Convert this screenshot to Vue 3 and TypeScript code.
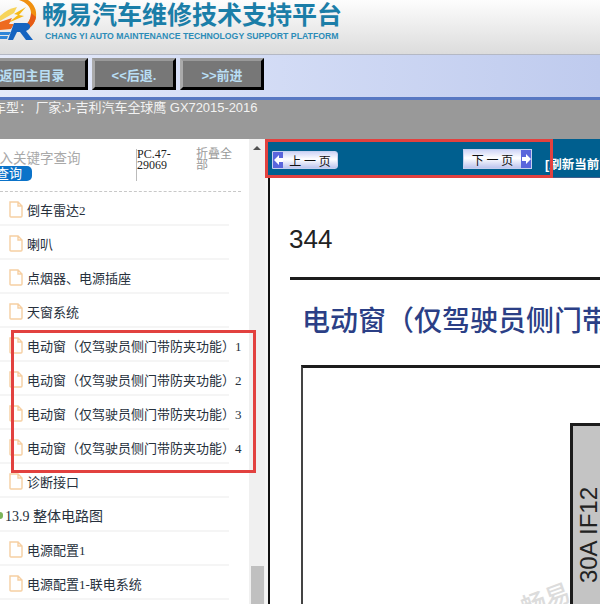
<script setup lang="ts">
interface TreeRow {
  label: string;
  kind: 'doc' | 'folder';
}

const windowTitle = '电动窗（仅驾驶员侧门带防夹功能）';

const rows: TreeRow[] = [
  { label: '倒车雷达2', kind: 'doc' },
  { label: '喇叭', kind: 'doc' },
  { label: '点烟器、电源插座', kind: 'doc' },
  { label: '天窗系统', kind: 'doc' },
  { label: `${windowTitle}1`, kind: 'doc' },
  { label: `${windowTitle}2`, kind: 'doc' },
  { label: `${windowTitle}3`, kind: 'doc' },
  { label: `${windowTitle}4`, kind: 'doc' },
  { label: '诊断接口', kind: 'doc' },
  { label: '13.9 整体电路图', kind: 'folder' },
  { label: '电源配置1', kind: 'doc' },
  { label: '电源配置1-联电系统', kind: 'doc' },
];
</script>

<template>
  <div class="page">
    <header class="brand">
      <svg class="logo" width="37" height="41" viewBox="0 0 37 41">
        <path d="M19 0 H28 C34 4 37 10 36 17 C35 23 31 28 26 30 L24 26 C29 23 31 18 31 13 C31 7 26 2 19 0 Z" fill="#f0900f" />
        <path d="M31 13 C31 18 29 23 24 26 L26 30 C31 28 35 23 36 17 Z" fill="#e65a16" />
        <path d="M0 16 C5 11 11 8 17 7 L14 13 L0 21 Z" fill="#f7d45a" />
        <path d="M26 7 L14 14 L18 15 L8 23 L24 16 L19 15 Z" fill="#f6b916" />
        <path d="M0 22 L12 18 L9 24 L14 24 L11 29 L0 30 Z" fill="#ee6a20" />
        <path d="M14 23 H26 C31 23 32 29 26 31 L33 40 H26 L20 32 H17 L13 40 H8 Z" fill="#1664c0" />
        <path d="M0 32 H11 L9 35 H0 Z M0 36 H8 L7 39 H0 Z" fill="#2f86d8" />
      </svg>
      <div class="brand-text">
        <div class="brand-name">畅易汽车维修技术支持平台</div>
        <div class="brand-sub">CHANG YI AUTO MAINTENANCE TECHNOLOGY SUPPORT PLATFORM</div>
      </div>
    </header>

    <nav class="nav">
      <button class="nav-btn nav-btn-home">返回主目录</button>
      <button class="nav-btn">&lt;&lt;后退.</button>
      <button class="nav-btn">&gt;&gt;前进</button>
    </nav>

    <div class="model-bar">车型： 厂家:J-吉利汽车全球鹰 GX72015-2016</div>

    <main class="main">
      <aside class="side">
        <div class="side-panel">
          <div class="search">
            <div class="search-left">
              <div class="search-hint">输入关键字查询</div>
              <div class="search-btn">查询</div>
            </div>
            <div class="search-code">PC.47-29069</div>
            <div class="search-fold">折叠全部</div>
          </div>
          <ul class="tree">
            <li v-for="row in rows" :key="row.label" class="tree-row">
              <template v-if="row.kind === 'doc'">
                <svg class="doc-icon" width="14" height="17" viewBox="0 0 14 17">
                  <path d="M1 1 H9 L13 5 V15 Q13 16 12 16 H2 Q1 16 1 15 Z M9 1 V5 H13" fill="#fff" stroke="#f6cfa2" stroke-width="1.4" />
                </svg>
              </template>
              <span v-else class="folder-dot"></span>
              <span class="tree-label" :class="{ 'tree-label-folder': row.kind === 'folder' }">{{ row.label }}</span>
            </li>
          </ul>
        </div>
        <div class="scrollbar">
          <span class="scroll-up"></span>
          <span class="scroll-thumb"></span>
        </div>
      </aside>

      <section class="viewer">
        <div class="pager">
          <div class="page-btn page-btn-prev">
            <span class="page-cap">
              <svg width="9" height="10" viewBox="0 0 9 10"><path d="M0 5 L5 0 V3 H9 V7 H5 V10 Z" fill="#fff" /></svg>
            </span>
            <span class="page-text">上 一 页</span>
          </div>
          <div class="page-btn page-btn-next">
            <span class="page-text">下 一 页</span>
            <span class="page-cap">
              <svg width="9" height="10" viewBox="0 0 9 10"><path d="M9 5 L4 0 V3 H0 V7 H4 V10 Z" fill="#fff" /></svg>
            </span>
          </div>
          <div class="refresh">[刷新当前页]</div>
        </div>

        <div class="sheet">
          <div class="sheet-num">344</div>
          <div class="sheet-rule"></div>
          <h1 class="sheet-title">{{ windowTitle }}</h1>
          <div class="diagram">
            <div class="fuse">
              <span class="fuse-label">30A IF12</span>
            </div>
          </div>
        </div>
      </section>
    </main>

    <div class="watermark">畅易</div>
    <div class="mark mark-pager"></div>
    <div class="mark mark-rows"></div>
  </div>
</template>

<style>
html,
body {
  margin: 0;
  overflow: hidden;
}
</style>

<style scoped>
.page {
  position: relative;
  width: 600px;
  height: 604px;
  overflow: hidden;
  background: #fff;
  font-family: "Liberation Sans", "Noto Sans CJK SC", sans-serif;
}

.brand {
  display: flex;
  height: 55px;
  box-sizing: border-box;
  background: linear-gradient(#fdfdfd, #dcdcdc);
  border-bottom: 1px solid #b4b8c4;
}

.logo {
  flex: none;
  margin-right: 5px;
}

.brand-text {
  display: flex;
  flex-direction: column;
}

.brand-name {
  height: 30px;
  font-size: 25px;
  line-height: 30px;
  font-weight: 700;
  color: #1b7ea8;
  white-space: nowrap;
}

.brand-sub {
  margin: 1px 0 0 3px;
  font-size: 8.7px;
  line-height: 11px;
  font-weight: 700;
  color: #2c8cb8;
  white-space: nowrap;
}

.nav {
  display: flex;
  gap: 4px;
  height: 42px;
  box-sizing: border-box;
  padding-top: 3px;
  background: linear-gradient(90deg, #e6ebfa, #d8e0f7 30%, #bfcbee);
}

.nav-btn {
  flex: none;
  width: 84px;
  height: 32px;
  box-sizing: border-box;
  padding: 0;
  background: #777;
  border-width: 3px;
  border-style: solid;
  border-color: #999 #000 #000 #aaa;
  font-family: inherit;
  font-size: 13px;
  font-weight: 700;
  color: #b9def4;
}

.nav-btn-home {
  width: 112px;
  margin-left: -24px;
}

.model-bar {
  height: 42px;
  box-sizing: border-box;
  text-indent: -7px;
  background: #999;
  border-top: 3px solid #5878c2;
  font-size: 13px;
  line-height: 15px;
  letter-spacing: -0.05px;
  color: #f2f2f2;
  white-space: nowrap;
}

.main {
  display: flex;
  height: 465px;
}

.side {
  display: flex;
  flex: none;
  width: 268px;
  border-right: 3px solid #f4f4f4;
  box-sizing: border-box;
}

.side-panel {
  flex: none;
  width: 249px;
  overflow: hidden;
}

.search {
  display: flex;
  width: 241px;
  height: 53px;
  box-sizing: border-box;
  border-bottom: 1px dashed #c8c8c8;
}

.search-left {
  flex: none;
  width: 136px;
  padding-top: 12px;
}

.search-hint {
  margin-left: -14px;
  font-size: 13.5px;
  line-height: 15px;
  color: #a9a9a9;
  white-space: nowrap;
}

.search-btn {
  width: 48px;
  height: 15px;
  margin-left: -16px;
  padding-right: 10px;
  box-sizing: border-box;
  background: #0b73c9;
  border-radius: 0 5px 5px 0;
  font-size: 13px;
  line-height: 15px;
  text-align: right;
  color: #fff;
}

.search-code {
  flex: none;
  width: 60px;
  height: 32px;
  box-sizing: border-box;
  margin-top: 10px;
  border-left: 1px solid #bbb;
  font-family: "Liberation Serif", serif;
  font-size: 12px;
  line-height: 11px;
  color: #222;
  word-break: break-word;
}

.search-fold {
  flex: none;
  width: 38px;
  margin-top: 10px;
  font-size: 12px;
  line-height: 11px;
  color: #999;
}

.tree {
  margin: 0;
  padding: 0;
  list-style: none;
}

.tree-row {
  display: flex;
  align-items: center;
  width: 229px;
  height: 34px;
  box-sizing: border-box;
  padding: 2px 0 0 9px;
  border-bottom: 2px solid #f5f5f5;
}

.doc-icon {
  flex: none;
  margin-right: 4px;
}

.folder-dot {
  flex: none;
  width: 3px;
  height: 7px;
  margin-left: -9px;
  margin-right: 2px;
  border-radius: 0 4px 4px 0;
  background: #7cb45a;
}

.tree-label {
  font-family: "Liberation Serif", "Noto Sans CJK SC", serif;
  font-size: 13px;
  color: #26303c;
  white-space: nowrap;
}

.tree-label-folder {
  font-size: 14px;
}

.scrollbar {
  display: flex;
  flex-direction: column;
  align-items: center;
  justify-content: space-between;
  flex: none;
  width: 16px;
  background: #f0f0f0;
}

.scroll-up {
  width: 0;
  height: 0;
  margin-top: 7px;
  border-left: 4px solid transparent;
  border-right: 4px solid transparent;
  border-bottom: 4px solid #505050;
}

.scroll-thumb {
  width: 13px;
  height: 38px;
  background: #c0c0c0;
}

.viewer {
  display: flex;
  flex-direction: column;
  flex: 1;
  min-width: 0;
}

.pager {
  display: flex;
  flex: none;
  height: 39px;
  box-sizing: border-box;
  margin-left: -3px;
  padding-left: 7px;
  background: #005f8f;
  border-bottom: 1px solid #3f5f8c;
}

.page-btn {
  display: flex;
  flex: none;
  align-items: center;
  box-sizing: border-box;
  border: 1px solid #c6d0ee;
  background: linear-gradient(#cfd5f6, #fff 45%, #bcc4ee);
  font-family: "Noto Sans CJK SC", sans-serif;
  font-size: 12px;
  color: #111;
}

.page-btn-prev {
  width: 66px;
  height: 18px;
  margin-top: 12px;
  border-radius: 0 3px 3px 0;
}

.page-btn-next {
  width: 69px;
  height: 20px;
  margin: 10px 0 0 125px;
}

.page-text {
  flex: 1;
  text-align: center;
  white-space: nowrap;
}

.page-cap {
  display: flex;
  flex: none;
  align-items: center;
  justify-content: center;
  width: 10px;
  height: 100%;
  background: #5a66dc;
}

.refresh {
  flex: none;
  margin: 19px 0 0 13px;
  font-size: 12.5px;
  line-height: 15px;
  font-weight: 700;
  color: #fff;
  white-space: nowrap;
}

.sheet {
  flex: 1;
  min-height: 0;
  overflow: hidden;
  border-left: 2px solid #111;
}

.sheet-num {
  margin: 46px 0 0 19px;
  font-size: 26px;
  line-height: 30px;
  color: #222;
}

.sheet-rule {
  height: 3px;
  margin: 23px 0 0 20px;
  background: #1c1c1c;
}

.sheet-title {
  margin: 5px 0 6px 32px;
  font-size: 28px;
  line-height: 74px;
  font-weight: 500;
  color: #2b3f86;
  white-space: nowrap;
}

.diagram {
  display: flex;
  justify-content: flex-end;
  height: 300px;
  box-sizing: border-box;
  margin-left: 31px;
  padding-top: 55px;
  border-top: 3px solid #1c1c1c;
  border-left: 2px solid #444;
}

.fuse {
  display: flex;
  align-items: flex-start;
  width: 30px;
  height: 240px;
  box-sizing: border-box;
  border-top: 3px solid #1c1c1c;
  border-left: 3px solid #1c1c1c;
  background: #c4c4c4;
}

.fuse-label {
  margin: 61px 0 0 4px;
  writing-mode: vertical-rl;
  transform: rotate(180deg);
  font-size: 24px;
  line-height: 24px;
  color: #222;
  white-space: nowrap;
}

.watermark {
  position: absolute;
  left: 520px;
  top: 580px;
  font-size: 25px;
  font-weight: 500;
  color: #dcdcdc;
  transform: rotate(-20deg);
}

.mark {
  position: absolute;
  box-sizing: border-box;
  border: 3px solid #e2413f;
}

.mark-pager {
  left: 265px;
  top: 139px;
  width: 288px;
  height: 39px;
}

.mark-rows {
  left: 11px;
  top: 330px;
  width: 245px;
  height: 143px;
}
</style>
